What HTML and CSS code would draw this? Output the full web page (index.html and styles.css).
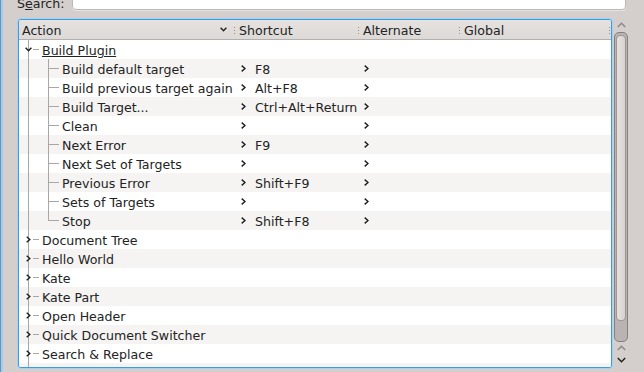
FILE: index.html
```html
<!DOCTYPE html>
<html lang="en">
<head>
    <meta charset="UTF-8">
    <meta name="viewport" content="width=device-width, initial-scale=1.0">
    <title>Configure Shortcuts</title>
    <link rel="stylesheet" href="styles.css">
</head>
<body>
    <div class="edge"></div>
    <div class="page">
        <div class="search-row">
            <label class="search-label" for="search">S<u>e</u>arch:</label>
            <input class="search-input" type="text" id="search">
        </div>

        <div class="content">
            <div class="tree">
                <div class="head">
                    <div class="hcell first"><span class="htext">Action</span>
                        <svg class="sort" width="7" height="5" viewBox="0 0 7 5"><path d="M0.6 0.8 L3.5 3.8 L6.4 0.8"/></svg>
                    </div>
                    <div class="hcell"><span class="htext">Shortcut</span></div>
                    <div class="hcell"><span class="htext">Alternate</span></div>
                    <div class="hcell"><span class="htext">Global</span></div>
                    <div class="hcell"></div>
                </div>

                <div class="body">
                    <div class="row">
                        <div class="cell action"><span class="branch root"><svg class="exp-open" width="7" height="5" viewBox="0 0 7 5"><path d="M0.6 0.8 L3.5 3.8 L6.4 0.8"/></svg></span><span class="name hot">Build Plugin</span></div>
                        <div class="cell"></div><div class="cell"></div><div class="cell"></div>
                    </div>
                    <div class="row alt">
                        <div class="cell action"><span class="branch child"></span><span class="name">Build default target</span></div>
                        <div class="cell keys"><svg class="chev" width="5" height="7" viewBox="0 0 5 7"><path d="M0.7 0.6 L4 3.5 L0.7 6.4"/></svg><span class="key">F8</span></div>
                        <div class="cell alt-keys"><svg class="chev" width="5" height="7" viewBox="0 0 5 7"><path d="M0.7 0.6 L4 3.5 L0.7 6.4"/></svg></div>
                        <div class="cell"></div>
                    </div>
                    <div class="row">
                        <div class="cell action"><span class="branch child"></span><span class="name">Build previous target again</span></div>
                        <div class="cell keys"><svg class="chev" width="5" height="7" viewBox="0 0 5 7"><path d="M0.7 0.6 L4 3.5 L0.7 6.4"/></svg><span class="key">Alt+F8</span></div>
                        <div class="cell alt-keys"><svg class="chev" width="5" height="7" viewBox="0 0 5 7"><path d="M0.7 0.6 L4 3.5 L0.7 6.4"/></svg></div>
                        <div class="cell"></div>
                    </div>
                    <div class="row alt">
                        <div class="cell action"><span class="branch child"></span><span class="name">Build Target...</span></div>
                        <div class="cell keys"><svg class="chev" width="5" height="7" viewBox="0 0 5 7"><path d="M0.7 0.6 L4 3.5 L0.7 6.4"/></svg><span class="key">Ctrl+Alt+Return</span></div>
                        <div class="cell alt-keys"><svg class="chev" width="5" height="7" viewBox="0 0 5 7"><path d="M0.7 0.6 L4 3.5 L0.7 6.4"/></svg></div>
                        <div class="cell"></div>
                    </div>
                    <div class="row">
                        <div class="cell action"><span class="branch child"></span><span class="name">Clean</span></div>
                        <div class="cell keys"><svg class="chev" width="5" height="7" viewBox="0 0 5 7"><path d="M0.7 0.6 L4 3.5 L0.7 6.4"/></svg></div>
                        <div class="cell alt-keys"><svg class="chev" width="5" height="7" viewBox="0 0 5 7"><path d="M0.7 0.6 L4 3.5 L0.7 6.4"/></svg></div>
                        <div class="cell"></div>
                    </div>
                    <div class="row alt">
                        <div class="cell action"><span class="branch child"></span><span class="name">Next Error</span></div>
                        <div class="cell keys"><svg class="chev" width="5" height="7" viewBox="0 0 5 7"><path d="M0.7 0.6 L4 3.5 L0.7 6.4"/></svg><span class="key">F9</span></div>
                        <div class="cell alt-keys"><svg class="chev" width="5" height="7" viewBox="0 0 5 7"><path d="M0.7 0.6 L4 3.5 L0.7 6.4"/></svg></div>
                        <div class="cell"></div>
                    </div>
                    <div class="row">
                        <div class="cell action"><span class="branch child"></span><span class="name">Next Set of Targets</span></div>
                        <div class="cell keys"><svg class="chev" width="5" height="7" viewBox="0 0 5 7"><path d="M0.7 0.6 L4 3.5 L0.7 6.4"/></svg></div>
                        <div class="cell alt-keys"><svg class="chev" width="5" height="7" viewBox="0 0 5 7"><path d="M0.7 0.6 L4 3.5 L0.7 6.4"/></svg></div>
                        <div class="cell"></div>
                    </div>
                    <div class="row alt">
                        <div class="cell action"><span class="branch child"></span><span class="name">Previous Error</span></div>
                        <div class="cell keys"><svg class="chev" width="5" height="7" viewBox="0 0 5 7"><path d="M0.7 0.6 L4 3.5 L0.7 6.4"/></svg><span class="key">Shift+F9</span></div>
                        <div class="cell alt-keys"><svg class="chev" width="5" height="7" viewBox="0 0 5 7"><path d="M0.7 0.6 L4 3.5 L0.7 6.4"/></svg></div>
                        <div class="cell"></div>
                    </div>
                    <div class="row">
                        <div class="cell action"><span class="branch child"></span><span class="name">Sets of Targets</span></div>
                        <div class="cell keys"><svg class="chev" width="5" height="7" viewBox="0 0 5 7"><path d="M0.7 0.6 L4 3.5 L0.7 6.4"/></svg></div>
                        <div class="cell alt-keys"><svg class="chev" width="5" height="7" viewBox="0 0 5 7"><path d="M0.7 0.6 L4 3.5 L0.7 6.4"/></svg></div>
                        <div class="cell"></div>
                    </div>
                    <div class="row alt">
                        <div class="cell action"><span class="branch child last"></span><span class="name">Stop</span></div>
                        <div class="cell keys"><svg class="chev" width="5" height="7" viewBox="0 0 5 7"><path d="M0.7 0.6 L4 3.5 L0.7 6.4"/></svg><span class="key">Shift+F8</span></div>
                        <div class="cell alt-keys"><svg class="chev" width="5" height="7" viewBox="0 0 5 7"><path d="M0.7 0.6 L4 3.5 L0.7 6.4"/></svg></div>
                        <div class="cell"></div>
                    </div>

                    <div class="row">
                        <div class="cell action"><span class="branch root"><svg class="exp-closed" width="5" height="7" viewBox="0 0 5 7"><path d="M0.7 0.8 L3.8 3.5 L0.7 6.2"/></svg></span><span class="name">Document Tree</span></div>
                        <div class="cell"></div><div class="cell"></div><div class="cell"></div>
                    </div>
                    <div class="row alt">
                        <div class="cell action"><span class="branch root"><svg class="exp-closed" width="5" height="7" viewBox="0 0 5 7"><path d="M0.7 0.8 L3.8 3.5 L0.7 6.2"/></svg></span><span class="name">Hello World</span></div>
                        <div class="cell"></div><div class="cell"></div><div class="cell"></div>
                    </div>
                    <div class="row">
                        <div class="cell action"><span class="branch root"><svg class="exp-closed" width="5" height="7" viewBox="0 0 5 7"><path d="M0.7 0.8 L3.8 3.5 L0.7 6.2"/></svg></span><span class="name">Kate</span></div>
                        <div class="cell"></div><div class="cell"></div><div class="cell"></div>
                    </div>
                    <div class="row alt">
                        <div class="cell action"><span class="branch root"><svg class="exp-closed" width="5" height="7" viewBox="0 0 5 7"><path d="M0.7 0.8 L3.8 3.5 L0.7 6.2"/></svg></span><span class="name">Kate Part</span></div>
                        <div class="cell"></div><div class="cell"></div><div class="cell"></div>
                    </div>
                    <div class="row">
                        <div class="cell action"><span class="branch root"><svg class="exp-closed" width="5" height="7" viewBox="0 0 5 7"><path d="M0.7 0.8 L3.8 3.5 L0.7 6.2"/></svg></span><span class="name">Open Header</span></div>
                        <div class="cell"></div><div class="cell"></div><div class="cell"></div>
                    </div>
                    <div class="row alt">
                        <div class="cell action"><span class="branch root"><svg class="exp-closed" width="5" height="7" viewBox="0 0 5 7"><path d="M0.7 0.8 L3.8 3.5 L0.7 6.2"/></svg></span><span class="name">Quick Document Switcher</span></div>
                        <div class="cell"></div><div class="cell"></div><div class="cell"></div>
                    </div>
                    <div class="row">
                        <div class="cell action"><span class="branch root"><svg class="exp-closed" width="5" height="7" viewBox="0 0 5 7"><path d="M0.7 0.8 L3.8 3.5 L0.7 6.2"/></svg></span><span class="name">Search &amp; Replace</span></div>
                        <div class="cell"></div><div class="cell"></div><div class="cell"></div>
                    </div>
                    <div class="row alt">
                        <div class="cell action"><span class="branch root"><svg class="exp-closed" width="5" height="7" viewBox="0 0 5 7"><path d="M0.7 0.8 L3.8 3.5 L0.7 6.2"/></svg></span><span class="name">Snippets</span></div>
                        <div class="cell"></div><div class="cell"></div><div class="cell"></div>
                    </div>
                </div>
            </div>

            <div class="scrollbar">
                <div class="sb-btn"><svg width="9" height="6" viewBox="0 0 9 6"><path class="dim" d="M0.8 5 L4.5 1.2 L8.2 5"/></svg></div>
                <div class="groove">
                    <div class="handle"></div>
                </div>
                <div class="sb-btn"><svg width="9" height="6" viewBox="0 0 9 6"><path class="dim" d="M0.8 5 L4.5 1.2 L8.2 5"/></svg></div>
                <div class="sb-btn"><svg width="9" height="6" viewBox="0 0 9 6"><path d="M0.8 1 L4.5 4.8 L8.2 1"/></svg></div>
            </div>

            <div class="right-edge"></div>
        </div>
    </div>
</body>
</html>
```

FILE: styles.css
```css
html, body {
    margin: 0;
    padding: 0;
}
body {
    width: 644px;
    height: 372px;
    overflow: hidden;
    display: flex;
    background-color: #d4cfcc;
    font-family: "DejaVu Sans", sans-serif;
    font-size: 12.6px;
    color: #232323;
}
.edge {
    width: 3px;
    flex: none;
    background: linear-gradient(to right, #5a97c9 0, #5a97c9 1px, #a9cbe6 1px);
}
.page {
    flex: 1;
    display: flex;
    flex-direction: column;
}

/* search line, mostly scrolled off the top */
.search-row {
    display: flex;
    align-items: flex-start;
    height: 19px;
    margin-top: -6px;
    padding-left: 14px;
}
.search-label {
    width: 55px;
    flex: none;
    line-height: 19px;
}
.search-input {
    width: 554px;
    height: 16px;
    box-sizing: border-box;
    margin: 0;
    padding: 0 4px;
    border: 1px solid #bdb8b5;
    border-radius: 4px;
    background: #fff;
    box-shadow: 0 1px 0 #e6e3e1;
}

.content {
    display: flex;
    margin-top: 6px;
    padding-left: 15px;
    height: 349px;
}

/* tree view */
.tree {
    width: 594px;
    height: 349px;
    box-sizing: border-box;
    border: 1px solid #3d9be0;
    border-radius: 3px;
    box-shadow: 0 0 0 1px #a8d1f0;
    background: #fff;
    overflow: hidden;
    display: flex;
    flex-direction: column;
}
.head {
    display: grid;
    grid-template-columns: 215px 124px 101px 150px 2px;
    height: 20px;
    flex: none;
    background: linear-gradient(#e5e2e0, #dcd9d7);
    border-bottom: 1px solid #b3afac;
    box-sizing: border-box;
}
.hcell {
    padding-left: 5px;
    white-space: nowrap;
    overflow: hidden;
    background: repeating-linear-gradient(to bottom, #8f8b88 0, #8f8b88 1px, transparent 1px, transparent 3px) 0 7px / 1px 7px no-repeat;
}
.htext {
    display: block;
    padding-top: 2px;
    line-height: 17px;
}
.hcell.first {
    display: flex;
    justify-content: space-between;
    align-items: center;
    padding: 0 7px 0 3px;
    background: none;
}
.sort path {
    fill: none;
    stroke: #232323;
    stroke-width: 1.4;
}

.body {
    flex: 1;
    overflow: hidden;
}
.row {
    display: grid;
    grid-template-columns: 215px 124px 101px 150px;
    height: 19px;
    background: #fff;
}
.row.alt {
    background: #f5f4f3;
}
.cell {
    display: flex;
    align-items: center;
    height: 19px;
    white-space: nowrap;
    overflow: hidden;
}
.name,
.key {
    padding-top: 2px;
    line-height: 17px;
}
.name.hot {
    text-decoration: underline;
}

/* branch lines of the tree */
.branch {
    flex: none;
    height: 19px;
    display: flex;
    align-items: center;
}
.branch.root {
    width: 23px;
    background:
        linear-gradient(#aaa6a3, #aaa6a3) 9px 0 / 1px 100% no-repeat,
        linear-gradient(#aaa6a3, #aaa6a3) 14px 9px / 6px 1px no-repeat;
}
.branch.child {
    width: 43px;
    background:
        linear-gradient(#aaa6a3, #aaa6a3) 9px 0 / 1px 100% no-repeat,
        linear-gradient(#aaa6a3, #aaa6a3) 29px 0 / 1px 100% no-repeat,
        linear-gradient(#aaa6a3, #aaa6a3) 30px 9px / 10px 1px no-repeat;
}
.branch.child.last {
    background:
        linear-gradient(#aaa6a3, #aaa6a3) 9px 0 / 1px 100% no-repeat,
        linear-gradient(#aaa6a3, #aaa6a3) 29px 0 / 1px 10px no-repeat,
        linear-gradient(#aaa6a3, #aaa6a3) 30px 9px / 10px 1px no-repeat;
}
.exp-open {
    margin-left: 6px;
}
.exp-closed {
    margin-left: 7px;
}
.exp-open path,
.exp-closed path,
.chev path {
    fill: none;
    stroke: #1e1e1e;
    stroke-width: 1.4;
}

.keys {
    padding-left: 7px;
}
.keys .key {
    margin-left: 9px;
}
.alt-keys {
    padding-left: 6px;
}

/* scrollbar */
.scrollbar {
    width: 14px;
    margin-left: 2px;
    flex: none;
    display: flex;
    flex-direction: column;
}
.sb-btn {
    height: 12px;
    flex: none;
    display: flex;
    align-items: center;
    justify-content: center;
}
.sb-btn path {
    fill: none;
    stroke: #1e1e1e;
    stroke-width: 1.4;
}
.sb-btn path.dim {
    stroke: #8c8784;
}
.groove {
    margin-top: 1px;
    height: 310px;
    flex: none;
    box-sizing: border-box;
    border: 1px solid #85807d;
    border-radius: 5px;
    background: #b9b4b1;
    padding: 2px 1px;
}
.handle {
    height: 286px;
    box-sizing: border-box;
    border: 1px solid #9b9693;
    border-radius: 4px;
    background: linear-gradient(to right, #e6e3e1, #d6d2cf);
}

.right-edge {
    width: 13px;
    flex: none;
    margin-top: -27px;
    height: 372px;
    background: linear-gradient(to right, transparent 0, transparent 13px, #9fb5c7 13px);
    background-size: 14px 100%;
}
```
